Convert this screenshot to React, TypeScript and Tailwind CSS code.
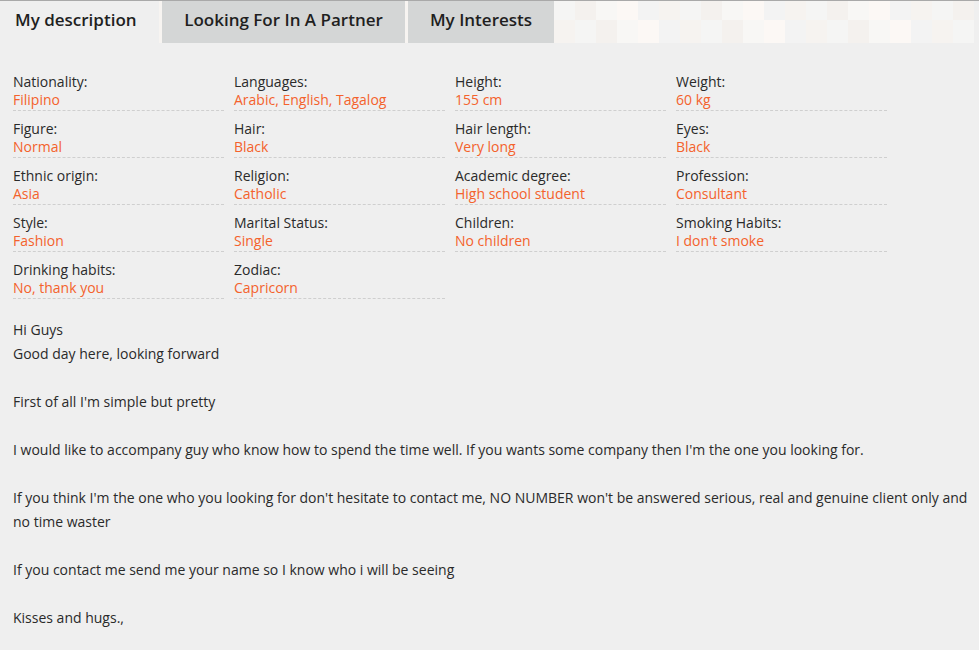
import React from 'react';

interface Field {
  label: string;
  value: string;
}

const fields: Field[] = [
  { label: 'Nationality:', value: 'Filipino' },
  { label: 'Languages:', value: 'Arabic, English, Tagalog' },
  { label: 'Height:', value: '155 cm' },
  { label: 'Weight:', value: '60 kg' },
  { label: 'Figure:', value: 'Normal' },
  { label: 'Hair:', value: 'Black' },
  { label: 'Hair length:', value: 'Very long' },
  { label: 'Eyes:', value: 'Black' },
  { label: 'Ethnic origin:', value: 'Asia' },
  { label: 'Religion:', value: 'Catholic' },
  { label: 'Academic degree:', value: 'High school student' },
  { label: 'Profession:', value: 'Consultant' },
  { label: 'Style:', value: 'Fashion' },
  { label: 'Marital Status:', value: 'Single' },
  { label: 'Children:', value: 'No children' },
  { label: 'Smoking Habits:', value: "I don't smoke" },
  { label: 'Drinking habits:', value: 'No, thank you' },
  { label: 'Zodiac:', value: 'Capricorn' },
];

const paragraphs: string[][] = [
  ['Hi Guys', 'Good day here, looking forward'],
  ["First of all I'm simple but pretty"],
  [
    "I would like to accompany guy who know how to spend the time well. If you wants some company then I'm the one you looking for.",
  ],
  [
    "If you think I'm the one who you looking for don't hesitate to contact me, NO NUMBER won't be answered serious, real and genuine client only and no time waster",
  ],
  ['If you contact me send me your name so I know who i will be seeing'],
  ['Kisses and hugs.,'],
];

const checkerColors = ['bg-[#f5f5f4]', 'bg-[#f4f1ee]', 'bg-[#f8f7f5]', 'bg-[#fcf8f5]', 'bg-[#f3f3f3]', 'bg-[#f6f3f0]'];

function Checker() {
  const cells = Array.from({ length: 40 }, (_, i) => checkerColors[(i * 7 + Math.floor(i / 20) * 3) % checkerColors.length]);
  return (
    <div className="flex-1 grid grid-cols-[repeat(20,21px)] grid-rows-[19px_23px] overflow-hidden">
      {cells.map((c, i) => (
        <div key={i} className={c} />
      ))}
    </div>
  );
}

export default function App() {
  return (
    <div className="min-h-[650px] bg-[#efefef] text-[#2a2a2a] font-['Open_Sans',sans-serif] text-[14px]">
      <div className="border-t border-[#a9a9a9] flex h-[43px]">
        <div className="w-[159px] bg-[#efefef] pl-[15px] pb-[4px] flex items-center text-[17px] font-semibold text-[#1f1f1f]">
          My description
        </div>
        <div className="w-[3px] bg-[#f7f4f1]" />
        <div className="w-[243px] bg-[#d4d6d6] pb-[4px] flex items-center justify-center text-[17px] font-semibold text-[#1f1f1f]">
          Looking For In A Partner
        </div>
        <div className="w-[3px] bg-[#f7f4f1]" />
        <div className="w-[146px] bg-[#d4d6d6] pb-[4px] flex items-center justify-center text-[17px] font-semibold text-[#1f1f1f]">
          My Interests
        </div>
        <Checker />
      </div>

      <div className="pl-[13px] pr-[10px] pt-[30px]">
        <div className="grid grid-cols-[repeat(4,211px)] gap-x-[10px] gap-y-[9px]">
          {fields.map((f) => (
            <div key={f.label} className="border-b border-dashed border-[#cfcfcf] pb-[1px]">
              <div className="leading-[18px]">{f.label}</div>
              <div className="leading-[18px] text-[#f4622c]">{f.value}</div>
            </div>
          ))}
        </div>

        <div className="mt-[19px] leading-[24px] flex flex-col gap-[24px]">
          {paragraphs.map((p, i) => (
            <div key={i}>
              {p.map((line) => (
                <div key={line}>{line}</div>
              ))}
            </div>
          ))}
        </div>
      </div>
    </div>
  );
}
